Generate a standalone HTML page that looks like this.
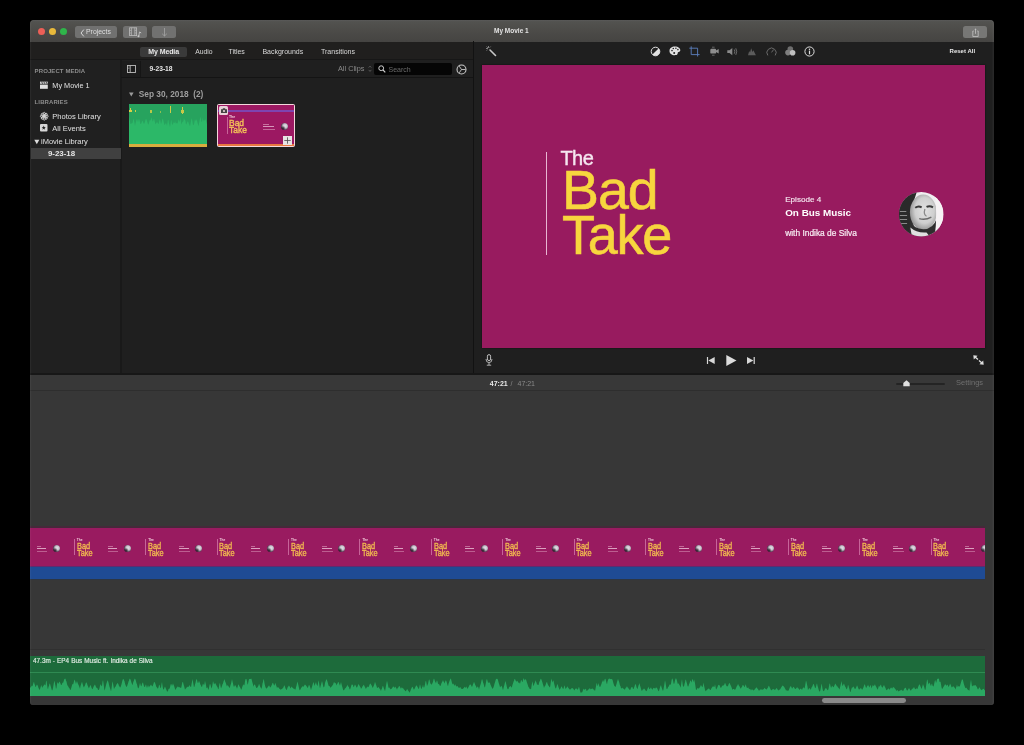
<!DOCTYPE html>
<html><head><meta charset="utf-8">
<style>
*{margin:0;padding:0;box-sizing:border-box}
html,body{width:1024px;height:745px;background:#000;overflow:hidden;font-family:"Liberation Sans",sans-serif;color:#ddd}
#root{position:absolute;left:0;top:0;width:1024px;height:745px;will-change:transform}
.a{position:absolute}
.t{position:absolute;white-space:nowrap;line-height:1}
#win{left:30px;top:20px;width:964px;height:685px;background:#1f1f1f;border-radius:4px 4px 3px 3px;overflow:hidden}
.light{width:7px;height:7px;border-radius:50%;top:27.5px}
.tb{height:12px;top:26px;border-radius:2.5px;background:#717170}
.th{top:527px;width:71.4px;height:40px}
.tt{white-space:nowrap;font-weight:bold;line-height:1}
svg{position:absolute;overflow:visible}
</style></head><body><div id="root">
<div id="win" class="a">
<!-- title bar -->
<div class="a" style="left:0;top:0;width:964px;height:21.6px;background:linear-gradient(#5a5a59,#52524f 8%,#4c4b48 50%,#454442)"></div>
<!-- tabs row -->
<div class="a" style="left:0;top:21.6px;width:443px;height:18.4px;background:#201f1e;border-bottom:1px solid #171717"></div>
<!-- sidebar -->
<div class="a" style="left:0;top:40px;width:91px;height:314px;background:#202020"></div>
<!-- browser -->
<div class="a" style="left:90.3px;top:40px;width:352.7px;height:314px;background:#1f1f1f;border-left:2px solid #191919"></div>
<div class="a" style="left:91px;top:57px;width:352px;height:1px;background:#141414"></div>
<!-- divider -->
<div class="a" style="left:442.5px;top:21px;width:1.5px;height:333px;background:#121212"></div>
<!-- viewer -->
<div class="a" style="left:444px;top:21.6px;width:520px;height:332.4px;background:#1f1f1f"></div>
<!-- timeline -->
<div class="a" style="left:0;top:353px;width:964px;height:1.5px;background:#171717"></div>
<div class="a" style="left:0;top:354.5px;width:964px;height:15.5px;background:#383838"></div>
<div class="a" style="left:0;top:370px;width:964px;height:1px;background:#2e2e2e"></div>
<div class="a" style="left:0;top:371px;width:964px;height:314px;background:#373737"></div>
</div>

<!-- ===== title bar contents ===== -->
<div class="a light" style="left:37.5px;background:#ec5f57"></div>
<div class="a light" style="left:48.5px;background:#e9b93b"></div>
<div class="a light" style="left:59.5px;background:#2fb54a"></div>
<div class="a tb" style="left:75px;width:42px"></div>
<svg style="left:79.5px;top:28.5px" width="5" height="8" viewBox="0 0 5 8"><path d="M3.8,0.6 L1,4 L3.8,7.4" fill="none" stroke="#d8d8d8" stroke-width="1"/></svg>
<div class="t" style="left:86px;top:29.3px;font-size:6.9px;color:#dedede">Projects</div>
<div class="a tb" style="left:123px;width:24px"></div>
<svg style="left:129px;top:27px" width="14" height="11" viewBox="0 0 14 11"><rect x="0.6" y="0.8" width="7" height="7.8" fill="none" stroke="#bdbdbd" stroke-width="0.8"/><path d="M2.4,0.8 V8.6 M5.8,0.8 V8.6" stroke="#bdbdbd" stroke-width="0.7"/><path d="M0.6,3.4 H2.4 M0.6,6 H2.4 M5.8,3.4 H7.6 M5.8,6 H7.6" stroke="#bdbdbd" stroke-width="0.6"/><path d="M10.5,5 L9.8,9.2" stroke="#c8c8c8" stroke-width="0.8"/><circle cx="9.5" cy="9.3" r="1" fill="#c8c8c8"/><path d="M10.5,5 L12.2,6" stroke="#c8c8c8" stroke-width="1"/></svg>
<div class="a tb" style="left:152px;width:24px"></div>
<svg style="left:161px;top:27px" width="7" height="10" viewBox="0 0 7 10"><path d="M3.5,1 V9 M1.2,6.8 L3.5,9 L5.8,6.8" fill="none" stroke="#a8a8a8" stroke-width="0.75"/></svg>
<div class="t" style="left:494px;top:28.2px;font-size:6.5px;font-weight:bold;color:#e2e2e2">My Movie 1</div>
<div class="a tb" style="left:962.8px;width:23.8px;top:25.9px;background:#777775"></div>
<svg style="left:971.5px;top:27.5px" width="7" height="9" viewBox="0 0 7 9"><path d="M1.8,3 H0.8 V8.5 H6.2 V3 H5.2 M3.5,1 V5.8" fill="none" stroke="#c8c8c8" stroke-width="0.75"/><path d="M2.3,1.6 L3.5,0.4 L4.7,1.6 Z" fill="#c8c8c8"/></svg>

<!-- ===== tabs ===== -->
<div class="a" style="left:140px;top:47px;width:46.5px;height:10px;border-radius:2px;background:#3a3a3a"></div>
<div class="t" style="left:148.3px;top:48.2px;font-size:7px;font-weight:bold;color:#e8e8e8;letter-spacing:-.1px">My Media</div>
<div class="t" style="left:195.2px;top:48.7px;font-size:6.8px;color:#d8d8d8">Audio</div>
<div class="t" style="left:228.4px;top:48.2px;font-size:7px;color:#d8d8d8">Titles</div>
<div class="t" style="left:262.4px;top:48.2px;font-size:7px;color:#d8d8d8">Backgrounds</div>
<div class="t" style="left:321px;top:48.2px;font-size:7px;color:#d8d8d8">Transitions</div>

<!-- ===== sidebar ===== -->
<div class="t" style="left:34.6px;top:68px;font-size:6px;font-weight:bold;color:#8e8e8e;letter-spacing:.1px">PROJECT MEDIA</div>
<svg style="left:40.2px;top:81px" width="8" height="8" viewBox="0 0 8 8"><rect x="0" y="3.6" width="7.8" height="4.2" fill="#e0e0e0"/><rect x="0" y="0.6" width="7.8" height="2.2" fill="#d0d0d0"/><path d="M1.6,0.6 L2.6,2.8 M3.8,0.6 L4.8,2.8 M6,0.6 L7,2.8" stroke="#202020" stroke-width=".7"/></svg>
<div class="t" style="left:52.3px;top:82px;font-size:7.3px;color:#e0e0e0">My Movie 1</div>
<div class="t" style="left:34.6px;top:98.7px;font-size:6px;font-weight:bold;color:#8e8e8e;letter-spacing:.1px">LIBRARIES</div>
<svg style="left:40.1px;top:111.8px" width="8.5" height="8.5" viewBox="0 0 8 8"><g fill="none" stroke="#d8d8d8" stroke-width=".8"><ellipse cx="4" cy="2" rx="1.1" ry="1.7"/><ellipse cx="4" cy="6" rx="1.1" ry="1.7"/><ellipse cx="2" cy="4" rx="1.7" ry="1.1"/><ellipse cx="6" cy="4" rx="1.7" ry="1.1"/><ellipse cx="2.6" cy="2.6" rx="1.1" ry="1.6" transform="rotate(-45 2.6 2.6)"/><ellipse cx="5.4" cy="5.4" rx="1.1" ry="1.6" transform="rotate(-45 5.4 5.4)"/><ellipse cx="5.4" cy="2.6" rx="1.1" ry="1.6" transform="rotate(45 5.4 2.6)"/><ellipse cx="2.6" cy="5.4" rx="1.1" ry="1.6" transform="rotate(45 2.6 5.4)"/></g></svg>
<div class="t" style="left:52.3px;top:112.5px;font-size:7.5px;color:#e0e0e0">Photos Library</div>
<svg style="left:40.3px;top:124.2px" width="8" height="8" viewBox="0 0 8 8"><rect x="0" y="0" width="7.5" height="7.5" rx="1" fill="#d8d8d8"/><path d="M3.75,1.6 L4.3,3.1 L5.9,3.1 L4.6,4.1 L5.1,5.7 L3.75,4.7 L2.4,5.7 L2.9,4.1 L1.6,3.1 L3.2,3.1 Z" fill="#232323"/></svg>
<div class="t" style="left:52.3px;top:124.5px;font-size:7.5px;color:#e0e0e0">All Events</div>
<svg style="left:34px;top:138.5px" width="6" height="6" viewBox="0 0 6 6"><path d="M0.3,0.8 H5.3 L2.8,5.2 Z" fill="#dcdcdc"/></svg>
<div class="t" style="left:41px;top:137.7px;font-size:7.5px;color:#e0e0e0">iMovie Library</div>
<div class="a" style="left:30.5px;top:147.7px;width:90.5px;height:11.5px;background:#404040"></div>
<div class="t" style="left:47.9px;top:149.5px;font-size:7.9px;font-weight:bold;color:#e6e6e6">9-23-18</div>

<!-- ===== browser toolbar ===== -->
<div class="a" style="left:121.5px;top:60.5px;width:19px;height:16.5px;background:#1c1c1c;border-right:1px solid #151515"></div>
<svg style="left:126.5px;top:64.5px" width="9" height="8" viewBox="0 0 9 8"><rect x="0.5" y="0.5" width="8" height="7" fill="none" stroke="#bdbdbd" stroke-width=".9"/><path d="M3.2,0.5 V7.5" stroke="#bdbdbd" stroke-width=".9"/><path d="M1.2,2 H2.5 M1.2,3.5 H2.5" stroke="#bdbdbd" stroke-width=".5"/></svg>
<div class="t" style="left:149.5px;top:65.5px;font-size:6.7px;font-weight:bold;color:#e6e6e6">9-23-18</div>
<div class="t" style="left:338px;top:65.1px;font-size:7.3px;color:#8a8a8a">All Clips</div>
<svg style="left:368px;top:64.8px" width="4" height="8" viewBox="0 0 4 8"><path d="M0.7,2.6 L2,1.1 L3.3,2.6 M0.7,4.9 L2,6.4 L3.3,4.9" fill="none" stroke="#6a6a6a" stroke-width=".7"/></svg>
<div class="a" style="left:374.3px;top:63px;width:78.2px;height:11.5px;border-radius:2px;background:#050505"></div>
<svg style="left:378px;top:65px" width="8" height="8" viewBox="0 0 8 8"><circle cx="3.2" cy="3.2" r="2.4" fill="none" stroke="#d0d0d0" stroke-width="1"/><path d="M5,5 L7.3,7.3" stroke="#d0d0d0" stroke-width="1.1"/></svg>
<div class="t" style="left:388.5px;top:65.5px;font-size:7px;color:#6a6a6a">Search</div>
<svg style="left:456px;top:64.4px" width="11" height="11" viewBox="0 0 11 11"><circle cx="5.5" cy="5.5" r="4.5" fill="none" stroke="#cacaca" stroke-width="1.1"/><path d="M5.5,5.5 L3.3,2.2 M5.5,5.5 L3.3,8.8 M5.5,5.5 H9.5" stroke="#cacaca" stroke-width=".9"/></svg>

<!-- ===== browser content ===== -->
<svg style="left:129.4px;top:91.5px" width="5" height="5" viewBox="0 0 5 5"><path d="M0,0.6 H4.6 L2.3,4.6 Z" fill="#9a9a9a"/></svg>
<div class="t" style="left:138.8px;top:89.8px;font-size:8.3px;font-weight:bold;color:#9e9e9e;white-space:pre">Sep 30, 2018  (2)</div>
<!-- green clip -->
<div class="a" style="left:129.3px;top:103.8px;width:77.8px;height:43px;background:#27a35e;overflow:hidden">
  <svg style="left:0;top:0" width="78" height="40" viewBox="0 0 78 40"><path d="M0,40 L0,12.4 L0.5,14.9 L1,17.4 L1.5,19.9 L2,19.9 L2.5,19.2 L3,19.3 L3.5,18.9 L4,16.6 L4.5,14.3 L5,16.6 L5.5,19.0 L6,21.8 L6.5,19.4 L7,17.7 L7.5,16.0 L8,14.7 L8.5,16.4 L9,18.0 L9.5,16.2 L10,14.5 L10.5,16.3 L11,18.1 L11.5,19.9 L12,19.9 L12.5,18.7 L13,17.6 L13.5,16.6 L14,17.7 L14.5,18.9 L15,20.0 L15.5,19.2 L16,17.6 L16.5,16.0 L17,14.4 L17.5,15.5 L18,17.1 L18.5,18.6 L19,20.2 L19.5,20.6 L20,18.8 L20.5,17.0 L21,15.5 L21.5,16.7 L22,14.8 L22.5,13.3 L23,15.2 L23.5,17.0 L24,17.5 L24.5,15.6 L25,14.6 L25.5,16.5 L26,18.4 L26.5,20.3 L27,19.6 L27.5,18.8 L28,17.9 L28.5,18.5 L29,19.4 L29.5,20.2 L30,18.2 L30.5,15.9 L31,15.2 L31.5,17.6 L32,20.0 L32.5,18.8 L33,16.6 L33.5,14.4 L34,15.0 L34.5,17.1 L35,19.3 L35.5,21.1 L36,20.6 L36.5,19.6 L37,19.1 L37.5,20.2 L38,21.7 L38.5,18.4 L39,15.5 L39.5,16.4 L40,19.4 L40.5,20.9 L41,22.9 L41.5,20.0 L42,16.3 L42.5,16.6 L43,20.3 L43.5,20.7 L44,20.1 L44.5,18.0 L45,18.9 L45.5,19.0 L46,17.0 L46.5,18.6 L47,19.7 L47.5,18.9 L48,19.3 L48.5,19.6 L49,17.7 L49.5,15.7 L50,15.6 L50.5,17.6 L51,17.7 L51.5,12.9 L52,18.1 L52.5,20.5 L53,19.0 L53.5,17.6 L54,17.9 L54.5,16.4 L55,13.4 L55.5,15.9 L56,15.7 L56.5,17.1 L57,20.5 L57.5,20.1 L58,18.8 L58.5,17.4 L59,17.2 L59.5,18.6 L60,19.9 L60.5,20.9 L61,22.3 L61.5,19.7 L62,16.9 L62.5,14.2 L63,15.2 L63.5,18.0 L64,20.7 L64.5,21.2 L65,19.9 L65.5,17.5 L66,15.0 L66.5,16.5 L67,16.9 L67.5,14.9 L68,16.7 L68.5,18.6 L69,20.6 L69.5,22.2 L70,19.6 L70.5,17.0 L71,14.3 L71.5,12.8 L72,15.4 L72.5,18.1 L73,17.4 L73.5,13.3 L74,17.8 L74.5,16.0 L75,15.9 L75.5,16.8 L76,15.2 L76.5,15.5 L77,17.1 L77.5,18.7 L78,20.2 L78,40 Z" fill="#2cb868"/></svg>
  <div class="a" style="left:0;top:40px;width:78px;height:3px;background:#d8ac3e"></div>
  <div class="a" style="left:.5px;top:4px;width:1px;height:4px;background:#d8d048"></div>
  <div class="a" style="left:0;top:6.5px;width:3px;height:2px;background:#d8d048"></div>
  <div class="a" style="left:5.5px;top:6px;width:1.5px;height:2.5px;background:#c8cc48"></div>
  <div class="a" style="left:21px;top:6.5px;width:1.5px;height:2.5px;background:#b8c848"></div>
  <div class="a" style="left:31px;top:7.5px;width:1.2px;height:1.5px;background:#90c050"></div>
  <div class="a" style="left:40.8px;top:2px;width:1px;height:7px;background:#d0cc48"></div>
  <div class="a" style="left:53px;top:3px;width:1px;height:7px;background:#d0cc48"></div>
  <div class="a" style="left:52.2px;top:6.5px;width:2.5px;height:2.5px;background:#c8c848"></div>
</div>
<!-- title clip (selected) -->
<div class="a" style="left:216.8px;top:103.6px;width:78.2px;height:43.8px;border-radius:2px;background:#f4d8dc"></div>
<div class="a" style="left:217.9px;top:104.7px;width:76px;height:41.6px;background:#9c1862;overflow:hidden">
  <div class="a" style="left:0;top:5.4px;width:76px;height:2.2px;background:#7e44b0"></div>
  <div class="a" style="left:1.4px;top:1.6px;width:8.4px;height:8.4px;border-radius:1.5px;background:#e8d0d8"></div>
  <svg style="left:3px;top:3.4px" width="6" height="5" viewBox="0 0 6 5"><path d="M0,1.2 H1.5 L2,0.3 H4 L4.5,1.2 H6 V5 H0 Z" fill="#444"/><circle cx="3" cy="3" r="1.1" fill="#e8d0d8"/></svg>
  <div class="a" style="left:8.8px;top:12px;width:.8px;height:17px;background:rgba(255,190,220,.45)"></div>
  <div class="tt a" style="left:11px;top:11px;font-size:3.5px;color:#f0c8d8">The</div>
  <div class="tt a" style="left:11px;top:14.6px;font-size:9.6px;line-height:7px;font-weight:normal;color:#f4c058;-webkit-text-stroke:.4px #f4c058;transform:scaleX(.88);transform-origin:0 0">Bad<br>Take</div>
  <div class="a" style="left:45.5px;top:19.5px;width:6px;height:.9px;background:rgba(255,220,235,.45)"></div>
  <div class="a" style="left:45.5px;top:21.4px;width:10.5px;height:1.3px;background:rgba(255,235,245,.6)"></div>
  <div class="a" style="left:45.5px;top:24.6px;width:11.5px;height:.9px;background:rgba(255,220,235,.4)"></div>
  <div class="a" style="left:63.3px;top:18.5px;width:7px;height:7px;border-radius:50%;background:radial-gradient(circle at 30% 75%,rgba(30,20,30,.85),rgba(30,20,30,0) 35%),radial-gradient(circle at 60% 42%,#e6e2ea,#c8c2cc 35%,#7a6a7a 58%,#2a2030 75%)"></div>
  <div class="a" style="left:0;top:39px;width:76px;height:2.6px;background:#e87840"></div>
  <div class="a" style="left:65.4px;top:31px;width:9.2px;height:9px;background:#e8e4e4"></div>
  <svg style="left:66.5px;top:32px" width="7" height="7" viewBox="0 0 7 7"><path d="M3.5,0.3 V6.7 M0.3,3.5 H6.7" stroke="#4a4a4a" stroke-width=".8"/></svg>
</div>

<!-- ===== viewer toolbar ===== -->
<svg style="left:485px;top:45px" width="12" height="12" viewBox="0 0 12 12"><path d="M5,5 L10.5,10.5" stroke="#c8c8c8" stroke-width="1.6" stroke-linecap="round"/><path d="M3.5,1 V3 M1,3.5 H3 M1.6,1.6 L2.8,2.8 M5.6,1.6 L4.6,2.6 M1.6,5.6 L2.6,4.6" stroke="#aaa" stroke-width=".7"/></svg>
<!-- color balance -->
<svg style="left:650px;top:45.7px" width="11" height="11" viewBox="0 0 11 11"><circle cx="5.5" cy="5.5" r="4.3" fill="#222" stroke="#e2e2e2" stroke-width="1"/><path d="M8.55,2.45 A4.3,4.3 0 0 1 2.45,8.55 Z" fill="#e2e2e2"/></svg>
<!-- palette -->
<svg style="left:669.3px;top:45.8px" width="12" height="10" viewBox="0 0 12 10"><path d="M5.8,0.6 C9.3,0.6 11.4,2.6 11.3,4.4 C11.2,5.8 9.6,5.5 9,6.2 C8.4,7 9.2,8.6 7,9.1 C3.4,9.7 0.5,7.7 0.5,4.9 C0.5,2.3 2.8,0.6 5.8,0.6 Z" fill="#e2e2e2"/><circle cx="3" cy="4.6" r=".8" fill="#222"/><circle cx="4.3" cy="2.5" r=".8" fill="#222"/><circle cx="6.9" cy="2.3" r=".8" fill="#222"/><circle cx="8.9" cy="3.6" r=".8" fill="#222"/><circle cx="5.2" cy="7" r="1" fill="#222"/></svg>
<!-- crop -->
<svg style="left:689px;top:46.3px" width="11" height="11" viewBox="0 0 11 11"><path d="M2.2,0.3 V8.6 H10.6 M0.3,2.2 H8.6 V10.5" fill="none" stroke="#5a7cb8" stroke-width=".95"/></svg>
<!-- stabilization camera -->
<svg style="left:709.5px;top:46.3px" width="9" height="10" viewBox="0 0 9 10"><rect x="0.3" y="2.8" width="5.8" height="4.8" rx="1.2" fill="#8e8e8e"/><path d="M6,4.4 L8.7,3 V7.4 L6,6 Z" fill="#8e8e8e"/><path d="M2,1.2 H4.6 M2,9.2 H4.6" stroke="#6e6e6e" stroke-width=".9"/></svg>
<!-- volume -->
<svg style="left:727.3px;top:48px" width="11" height="8" viewBox="0 0 11 8"><path d="M0.3,2.2 H2.5 L5.3,0 V7.2 L2.5,5 H0.3 Z" fill="#8a8a8a"/><path d="M7.3,1.5 Q8.4,3.6 7.3,5.7 M8.8,0.3 Q10.6,3.6 8.8,6.9" fill="none" stroke="#7a7a7a" stroke-width=".85"/></svg>
<!-- noise eq -->
<svg style="left:747.8px;top:47.6px" width="8" height="7.5" viewBox="0 0 8 7.5"><path d="M0,7.2 L1.2,3 L2,4.4 L3.2,0.3 L4.5,4 L5.4,2.2 L6.5,4.6 L7.9,7.2 Z" fill="#5c5c5c"/></svg>
<!-- speed -->
<svg style="left:765.5px;top:45.8px" width="11" height="10.5" viewBox="0 0 11 10.5"><path d="M1.8,9.4 A4.6,4.6 0 1 1 9.2,9.4" fill="none" stroke="#6e6e6e" stroke-width=".95"/><path d="M5.5,6.4 L7.6,3.6" stroke="#6e6e6e" stroke-width=".95"/></svg>
<!-- clip filter -->
<svg style="left:784.8px;top:46.4px" width="11" height="10.5" viewBox="0 0 11 10.5"><circle cx="5.3" cy="3" r="2.8" fill="#6e6e6e"/><circle cx="3" cy="6.6" r="2.8" fill="#7e7e7e"/><circle cx="7.6" cy="6.8" r="2.8" fill="#c0c0c0"/></svg>
<!-- info -->
<svg style="left:803.5px;top:45.5px" width="11" height="11" viewBox="0 0 11 11"><circle cx="5.5" cy="5.5" r="4.6" fill="none" stroke="#e0e0e0" stroke-width="1"/><circle cx="5.5" cy="3.2" r=".75" fill="#e0e0e0"/><path d="M5.5,4.6 V8.3" stroke="#e0e0e0" stroke-width="1.2"/></svg>
<div class="t" style="left:949.6px;top:47.6px;font-size:6px;font-weight:bold;color:#e8e8e8">Reset All</div>

<!-- ===== viewer frame ===== -->
<div class="a" style="left:481.5px;top:65px;width:503.5px;height:283px;background:#981b5f;overflow:hidden;box-shadow:0 0 1.5px #0c0c0c">
  <div class="a" style="left:64px;top:86.7px;width:1.8px;height:103px;background:#e8b6d2"></div>
  <div class="t" style="left:79px;top:83px;font-size:20px;color:#f6e6f0;letter-spacing:-.6px;-webkit-text-stroke:.4px #f6e6f0">The</div>
  <div class="t" style="left:80px;top:97px;font-size:56px;color:#f7d63e;letter-spacing:-1px;-webkit-text-stroke:.6px #f7d63e;transform:scaleX(.99);transform-origin:0 0">Bad</div>
  <div class="t" style="left:80.5px;top:142.2px;font-size:56px;color:#f7d63e;letter-spacing:-1.3px;-webkit-text-stroke:.6px #f7d63e;transform:scaleX(.965);transform-origin:0 0">Take</div>
  <div class="t" style="left:303.7px;top:130.5px;font-size:8.1px;color:#f4e4ee;-webkit-text-stroke:.15px #f4e4ee">Episode 4</div>
  <div class="t" style="left:303.7px;top:143.3px;font-size:9.9px;font-weight:bold;color:#fff">On Bus Music</div>
  <div class="t" style="left:303.7px;top:164px;font-size:8.4px;color:#f8eef4;-webkit-text-stroke:.2px #f8eef4">with Indika de Silva</div>
  <svg style="left:417.5px;top:126.8px" width="44.5" height="44.5" viewBox="0 0 55 55">
    <defs><clipPath id="cc"><circle cx="27.5" cy="27.5" r="27.5"/></clipPath>
    <radialGradient id="fg" cx="55%" cy="45%" r="60%"><stop offset="0" stop-color="#e2e2e2"/><stop offset=".6" stop-color="#cfcfcf"/><stop offset="1" stop-color="#8a8a8a"/></radialGradient></defs>
    <g clip-path="url(#cc)">
      <rect width="55" height="55" fill="#f0eef0"/>
      <rect x="0" y="0" width="18" height="55" fill="#3a3a3a"/>
      <path d="M0,0 H22 L18,12 L14,55 H0 Z" fill="#2a2a2a"/>
      <path d="M1,24 H9 M1,29 H10 M1,34 H10 M2,39 H10" stroke="#8a8a8a" stroke-width="1.3"/>
      <ellipse cx="30" cy="25" rx="16.5" ry="22" fill="url(#fg)"/>
      <path d="M20,19.5 Q24,16.5 28,19" stroke="#3a3a3a" stroke-width="2.4" fill="none"/>
      <path d="M34,18.5 Q38,16.5 42,19" stroke="#3a3a3a" stroke-width="2.4" fill="none"/>
      <path d="M32,21 Q30,28 34,30" stroke="#8a8a8a" stroke-width="1.6" fill="none"/>
      <path d="M25,33 Q33,35 40,31" stroke="#6a6a6a" stroke-width="1.6" fill="none"/>
      <path d="M13,34 Q18,46 30,46 Q42,46 47,32 L50,55 L12,55 Z" fill="#2e2e2e"/>
      <path d="M14,44 Q22,51 34,50 L38,55 L16,55 Z" fill="#e0e0e0"/>
      <path d="M44,0 H55 V55 H44 Q48,28 44,0 Z" fill="#f6f2f4"/>
    </g>
  </svg>
</div>

<!-- ===== viewer controls ===== -->
<svg style="left:484.5px;top:353.5px" width="8" height="12" viewBox="0 0 8 12"><rect x="2.4" y="0.6" width="3.2" height="6" rx="1.6" fill="none" stroke="#cfcfcf" stroke-width=".9"/><path d="M1,5 Q1,8.6 4,8.6 Q7,8.6 7,5 M4,8.6 V11 M1.8,11.2 H6.2" fill="none" stroke="#cfcfcf" stroke-width=".8"/></svg>
<svg style="left:706.5px;top:357.2px" width="8" height="7" viewBox="0 0 8 7"><path d="M0.5,0 V7" stroke="#d8d8d8" stroke-width="1.2"/><path d="M7.7,0 V7 L1.3,3.5 Z" fill="#d8d8d8"/></svg>
<svg style="left:725.9px;top:355px" width="11" height="11" viewBox="0 0 11 11"><path d="M0.3,0 V11 L10.5,5.5 Z" fill="#dcdcdc"/></svg>
<svg style="left:746.8px;top:357.2px" width="8" height="7" viewBox="0 0 8 7"><path d="M7.2,0 V7" stroke="#d8d8d8" stroke-width="1.2"/><path d="M0,0 V7 L6.4,3.5 Z" fill="#d8d8d8"/></svg>
<svg style="left:972.5px;top:355px" width="11" height="10" viewBox="0 0 11 10"><path d="M0.3,0.3 L4.6,0.8 L0.8,4.4 Z M10.7,9.7 L6.4,9.2 L10.2,5.6 Z" fill="#dedede"/><path d="M2,2 L5,4.6 M6,5.4 L9,8" stroke="#dedede" stroke-width="1.3"/></svg>

<!-- ===== timeline header ===== -->
<div class="t" style="left:489.8px;top:379.5px;font-size:7px;font-weight:bold;color:#e8e8e8">47:21</div>
<div class="t" style="left:510.5px;top:379.5px;font-size:7px;color:#8a8a8a">/</div>
<div class="t" style="left:517.5px;top:379.5px;font-size:7px;color:#8a8a8a">47:21</div>
<div class="a" style="left:896.4px;top:382.6px;width:48.4px;height:2px;border-radius:1px;background:#242424"></div>
<svg style="left:902.9px;top:380px" width="7" height="6.5" viewBox="0 0 7 6.5"><path d="M0.3,6.3 V3 L3.5,0.3 L6.7,3 V6.3 Z" fill="#e0e0e0"/></svg>
<div class="t" style="left:956px;top:378.7px;font-size:7.5px;color:#6f6f6f">Settings</div>

<!-- ===== filmstrip ===== -->
<div class="a" style="left:30px;top:525.6px;width:955px;height:2.2px;background:#45293a"></div>
<div class="a" style="left:30px;top:527.8px;width:955px;height:38.8px;background:#991b60;overflow:hidden">
<div class="a" style="left:-30px;top:-527.8px;width:1100px;height:600px">
<div class="a th" style="left:-6.1px">
<div class="a" style="left:8.6px;top:12px;width:.8px;height:15.7px;background:rgba(255,190,225,.45)"></div>
<div class="a tt" style="left:11.5px;top:12.4px;font-size:3.2px;color:#f0c8d8">The</div>
<div class="a tt" style="left:11.3px;top:15.6px;font-size:8.6px;line-height:6.9px;font-weight:normal;color:#f0b850;-webkit-text-stroke:.35px #f0b850;transform:scaleX(.86);transform-origin:0 0">Bad<br>Take</div>
<div class="a" style="left:42.7px;top:18.6px;width:4.7px;height:.9px;background:rgba(255,220,235,.4)"></div>
<div class="a" style="left:42.7px;top:20.8px;width:9.4px;height:1.3px;background:rgba(255,235,245,.65)"></div>
<div class="a" style="left:42.7px;top:23.7px;width:10.5px;height:.9px;background:rgba(255,220,235,.35)"></div>
<div class="a" style="left:58.7px;top:18px;width:7px;height:7px;border-radius:50%;background:radial-gradient(circle at 30% 75%,rgba(30,20,30,.85),rgba(30,20,30,0) 35%),radial-gradient(circle at 60% 42%,#e6e2ea,#c8c2cc 35%,#7a6a7a 58%,#2a2030 75%)"></div>
</div>
<div class="a th" style="left:65.3px">
<div class="a" style="left:8.6px;top:12px;width:.8px;height:15.7px;background:rgba(255,190,225,.45)"></div>
<div class="a tt" style="left:11.5px;top:12.4px;font-size:3.2px;color:#f0c8d8">The</div>
<div class="a tt" style="left:11.3px;top:15.6px;font-size:8.6px;line-height:6.9px;font-weight:normal;color:#f0b850;-webkit-text-stroke:.35px #f0b850;transform:scaleX(.86);transform-origin:0 0">Bad<br>Take</div>
<div class="a" style="left:42.7px;top:18.6px;width:4.7px;height:.9px;background:rgba(255,220,235,.4)"></div>
<div class="a" style="left:42.7px;top:20.8px;width:9.4px;height:1.3px;background:rgba(255,235,245,.65)"></div>
<div class="a" style="left:42.7px;top:23.7px;width:10.5px;height:.9px;background:rgba(255,220,235,.35)"></div>
<div class="a" style="left:58.7px;top:18px;width:7px;height:7px;border-radius:50%;background:radial-gradient(circle at 30% 75%,rgba(30,20,30,.85),rgba(30,20,30,0) 35%),radial-gradient(circle at 60% 42%,#e6e2ea,#c8c2cc 35%,#7a6a7a 58%,#2a2030 75%)"></div>
</div>
<div class="a th" style="left:136.7px">
<div class="a" style="left:8.6px;top:12px;width:.8px;height:15.7px;background:rgba(255,190,225,.45)"></div>
<div class="a tt" style="left:11.5px;top:12.4px;font-size:3.2px;color:#f0c8d8">The</div>
<div class="a tt" style="left:11.3px;top:15.6px;font-size:8.6px;line-height:6.9px;font-weight:normal;color:#f0b850;-webkit-text-stroke:.35px #f0b850;transform:scaleX(.86);transform-origin:0 0">Bad<br>Take</div>
<div class="a" style="left:42.7px;top:18.6px;width:4.7px;height:.9px;background:rgba(255,220,235,.4)"></div>
<div class="a" style="left:42.7px;top:20.8px;width:9.4px;height:1.3px;background:rgba(255,235,245,.65)"></div>
<div class="a" style="left:42.7px;top:23.7px;width:10.5px;height:.9px;background:rgba(255,220,235,.35)"></div>
<div class="a" style="left:58.7px;top:18px;width:7px;height:7px;border-radius:50%;background:radial-gradient(circle at 30% 75%,rgba(30,20,30,.85),rgba(30,20,30,0) 35%),radial-gradient(circle at 60% 42%,#e6e2ea,#c8c2cc 35%,#7a6a7a 58%,#2a2030 75%)"></div>
</div>
<div class="a th" style="left:208.1px">
<div class="a" style="left:8.6px;top:12px;width:.8px;height:15.7px;background:rgba(255,190,225,.45)"></div>
<div class="a tt" style="left:11.5px;top:12.4px;font-size:3.2px;color:#f0c8d8">The</div>
<div class="a tt" style="left:11.3px;top:15.6px;font-size:8.6px;line-height:6.9px;font-weight:normal;color:#f0b850;-webkit-text-stroke:.35px #f0b850;transform:scaleX(.86);transform-origin:0 0">Bad<br>Take</div>
<div class="a" style="left:42.7px;top:18.6px;width:4.7px;height:.9px;background:rgba(255,220,235,.4)"></div>
<div class="a" style="left:42.7px;top:20.8px;width:9.4px;height:1.3px;background:rgba(255,235,245,.65)"></div>
<div class="a" style="left:42.7px;top:23.7px;width:10.5px;height:.9px;background:rgba(255,220,235,.35)"></div>
<div class="a" style="left:58.7px;top:18px;width:7px;height:7px;border-radius:50%;background:radial-gradient(circle at 30% 75%,rgba(30,20,30,.85),rgba(30,20,30,0) 35%),radial-gradient(circle at 60% 42%,#e6e2ea,#c8c2cc 35%,#7a6a7a 58%,#2a2030 75%)"></div>
</div>
<div class="a th" style="left:279.5px">
<div class="a" style="left:8.6px;top:12px;width:.8px;height:15.7px;background:rgba(255,190,225,.45)"></div>
<div class="a tt" style="left:11.5px;top:12.4px;font-size:3.2px;color:#f0c8d8">The</div>
<div class="a tt" style="left:11.3px;top:15.6px;font-size:8.6px;line-height:6.9px;font-weight:normal;color:#f0b850;-webkit-text-stroke:.35px #f0b850;transform:scaleX(.86);transform-origin:0 0">Bad<br>Take</div>
<div class="a" style="left:42.7px;top:18.6px;width:4.7px;height:.9px;background:rgba(255,220,235,.4)"></div>
<div class="a" style="left:42.7px;top:20.8px;width:9.4px;height:1.3px;background:rgba(255,235,245,.65)"></div>
<div class="a" style="left:42.7px;top:23.7px;width:10.5px;height:.9px;background:rgba(255,220,235,.35)"></div>
<div class="a" style="left:58.7px;top:18px;width:7px;height:7px;border-radius:50%;background:radial-gradient(circle at 30% 75%,rgba(30,20,30,.85),rgba(30,20,30,0) 35%),radial-gradient(circle at 60% 42%,#e6e2ea,#c8c2cc 35%,#7a6a7a 58%,#2a2030 75%)"></div>
</div>
<div class="a th" style="left:350.9px">
<div class="a" style="left:8.6px;top:12px;width:.8px;height:15.7px;background:rgba(255,190,225,.45)"></div>
<div class="a tt" style="left:11.5px;top:12.4px;font-size:3.2px;color:#f0c8d8">The</div>
<div class="a tt" style="left:11.3px;top:15.6px;font-size:8.6px;line-height:6.9px;font-weight:normal;color:#f0b850;-webkit-text-stroke:.35px #f0b850;transform:scaleX(.86);transform-origin:0 0">Bad<br>Take</div>
<div class="a" style="left:42.7px;top:18.6px;width:4.7px;height:.9px;background:rgba(255,220,235,.4)"></div>
<div class="a" style="left:42.7px;top:20.8px;width:9.4px;height:1.3px;background:rgba(255,235,245,.65)"></div>
<div class="a" style="left:42.7px;top:23.7px;width:10.5px;height:.9px;background:rgba(255,220,235,.35)"></div>
<div class="a" style="left:58.7px;top:18px;width:7px;height:7px;border-radius:50%;background:radial-gradient(circle at 30% 75%,rgba(30,20,30,.85),rgba(30,20,30,0) 35%),radial-gradient(circle at 60% 42%,#e6e2ea,#c8c2cc 35%,#7a6a7a 58%,#2a2030 75%)"></div>
</div>
<div class="a th" style="left:422.3px">
<div class="a" style="left:8.6px;top:12px;width:.8px;height:15.7px;background:rgba(255,190,225,.45)"></div>
<div class="a tt" style="left:11.5px;top:12.4px;font-size:3.2px;color:#f0c8d8">The</div>
<div class="a tt" style="left:11.3px;top:15.6px;font-size:8.6px;line-height:6.9px;font-weight:normal;color:#f0b850;-webkit-text-stroke:.35px #f0b850;transform:scaleX(.86);transform-origin:0 0">Bad<br>Take</div>
<div class="a" style="left:42.7px;top:18.6px;width:4.7px;height:.9px;background:rgba(255,220,235,.4)"></div>
<div class="a" style="left:42.7px;top:20.8px;width:9.4px;height:1.3px;background:rgba(255,235,245,.65)"></div>
<div class="a" style="left:42.7px;top:23.7px;width:10.5px;height:.9px;background:rgba(255,220,235,.35)"></div>
<div class="a" style="left:58.7px;top:18px;width:7px;height:7px;border-radius:50%;background:radial-gradient(circle at 30% 75%,rgba(30,20,30,.85),rgba(30,20,30,0) 35%),radial-gradient(circle at 60% 42%,#e6e2ea,#c8c2cc 35%,#7a6a7a 58%,#2a2030 75%)"></div>
</div>
<div class="a th" style="left:493.7px">
<div class="a" style="left:8.6px;top:12px;width:.8px;height:15.7px;background:rgba(255,190,225,.45)"></div>
<div class="a tt" style="left:11.5px;top:12.4px;font-size:3.2px;color:#f0c8d8">The</div>
<div class="a tt" style="left:11.3px;top:15.6px;font-size:8.6px;line-height:6.9px;font-weight:normal;color:#f0b850;-webkit-text-stroke:.35px #f0b850;transform:scaleX(.86);transform-origin:0 0">Bad<br>Take</div>
<div class="a" style="left:42.7px;top:18.6px;width:4.7px;height:.9px;background:rgba(255,220,235,.4)"></div>
<div class="a" style="left:42.7px;top:20.8px;width:9.4px;height:1.3px;background:rgba(255,235,245,.65)"></div>
<div class="a" style="left:42.7px;top:23.7px;width:10.5px;height:.9px;background:rgba(255,220,235,.35)"></div>
<div class="a" style="left:58.7px;top:18px;width:7px;height:7px;border-radius:50%;background:radial-gradient(circle at 30% 75%,rgba(30,20,30,.85),rgba(30,20,30,0) 35%),radial-gradient(circle at 60% 42%,#e6e2ea,#c8c2cc 35%,#7a6a7a 58%,#2a2030 75%)"></div>
</div>
<div class="a th" style="left:565.1px">
<div class="a" style="left:8.6px;top:12px;width:.8px;height:15.7px;background:rgba(255,190,225,.45)"></div>
<div class="a tt" style="left:11.5px;top:12.4px;font-size:3.2px;color:#f0c8d8">The</div>
<div class="a tt" style="left:11.3px;top:15.6px;font-size:8.6px;line-height:6.9px;font-weight:normal;color:#f0b850;-webkit-text-stroke:.35px #f0b850;transform:scaleX(.86);transform-origin:0 0">Bad<br>Take</div>
<div class="a" style="left:42.7px;top:18.6px;width:4.7px;height:.9px;background:rgba(255,220,235,.4)"></div>
<div class="a" style="left:42.7px;top:20.8px;width:9.4px;height:1.3px;background:rgba(255,235,245,.65)"></div>
<div class="a" style="left:42.7px;top:23.7px;width:10.5px;height:.9px;background:rgba(255,220,235,.35)"></div>
<div class="a" style="left:58.7px;top:18px;width:7px;height:7px;border-radius:50%;background:radial-gradient(circle at 30% 75%,rgba(30,20,30,.85),rgba(30,20,30,0) 35%),radial-gradient(circle at 60% 42%,#e6e2ea,#c8c2cc 35%,#7a6a7a 58%,#2a2030 75%)"></div>
</div>
<div class="a th" style="left:636.5px">
<div class="a" style="left:8.6px;top:12px;width:.8px;height:15.7px;background:rgba(255,190,225,.45)"></div>
<div class="a tt" style="left:11.5px;top:12.4px;font-size:3.2px;color:#f0c8d8">The</div>
<div class="a tt" style="left:11.3px;top:15.6px;font-size:8.6px;line-height:6.9px;font-weight:normal;color:#f0b850;-webkit-text-stroke:.35px #f0b850;transform:scaleX(.86);transform-origin:0 0">Bad<br>Take</div>
<div class="a" style="left:42.7px;top:18.6px;width:4.7px;height:.9px;background:rgba(255,220,235,.4)"></div>
<div class="a" style="left:42.7px;top:20.8px;width:9.4px;height:1.3px;background:rgba(255,235,245,.65)"></div>
<div class="a" style="left:42.7px;top:23.7px;width:10.5px;height:.9px;background:rgba(255,220,235,.35)"></div>
<div class="a" style="left:58.7px;top:18px;width:7px;height:7px;border-radius:50%;background:radial-gradient(circle at 30% 75%,rgba(30,20,30,.85),rgba(30,20,30,0) 35%),radial-gradient(circle at 60% 42%,#e6e2ea,#c8c2cc 35%,#7a6a7a 58%,#2a2030 75%)"></div>
</div>
<div class="a th" style="left:707.9px">
<div class="a" style="left:8.6px;top:12px;width:.8px;height:15.7px;background:rgba(255,190,225,.45)"></div>
<div class="a tt" style="left:11.5px;top:12.4px;font-size:3.2px;color:#f0c8d8">The</div>
<div class="a tt" style="left:11.3px;top:15.6px;font-size:8.6px;line-height:6.9px;font-weight:normal;color:#f0b850;-webkit-text-stroke:.35px #f0b850;transform:scaleX(.86);transform-origin:0 0">Bad<br>Take</div>
<div class="a" style="left:42.7px;top:18.6px;width:4.7px;height:.9px;background:rgba(255,220,235,.4)"></div>
<div class="a" style="left:42.7px;top:20.8px;width:9.4px;height:1.3px;background:rgba(255,235,245,.65)"></div>
<div class="a" style="left:42.7px;top:23.7px;width:10.5px;height:.9px;background:rgba(255,220,235,.35)"></div>
<div class="a" style="left:58.7px;top:18px;width:7px;height:7px;border-radius:50%;background:radial-gradient(circle at 30% 75%,rgba(30,20,30,.85),rgba(30,20,30,0) 35%),radial-gradient(circle at 60% 42%,#e6e2ea,#c8c2cc 35%,#7a6a7a 58%,#2a2030 75%)"></div>
</div>
<div class="a th" style="left:779.3px">
<div class="a" style="left:8.6px;top:12px;width:.8px;height:15.7px;background:rgba(255,190,225,.45)"></div>
<div class="a tt" style="left:11.5px;top:12.4px;font-size:3.2px;color:#f0c8d8">The</div>
<div class="a tt" style="left:11.3px;top:15.6px;font-size:8.6px;line-height:6.9px;font-weight:normal;color:#f0b850;-webkit-text-stroke:.35px #f0b850;transform:scaleX(.86);transform-origin:0 0">Bad<br>Take</div>
<div class="a" style="left:42.7px;top:18.6px;width:4.7px;height:.9px;background:rgba(255,220,235,.4)"></div>
<div class="a" style="left:42.7px;top:20.8px;width:9.4px;height:1.3px;background:rgba(255,235,245,.65)"></div>
<div class="a" style="left:42.7px;top:23.7px;width:10.5px;height:.9px;background:rgba(255,220,235,.35)"></div>
<div class="a" style="left:58.7px;top:18px;width:7px;height:7px;border-radius:50%;background:radial-gradient(circle at 30% 75%,rgba(30,20,30,.85),rgba(30,20,30,0) 35%),radial-gradient(circle at 60% 42%,#e6e2ea,#c8c2cc 35%,#7a6a7a 58%,#2a2030 75%)"></div>
</div>
<div class="a th" style="left:850.7px">
<div class="a" style="left:8.6px;top:12px;width:.8px;height:15.7px;background:rgba(255,190,225,.45)"></div>
<div class="a tt" style="left:11.5px;top:12.4px;font-size:3.2px;color:#f0c8d8">The</div>
<div class="a tt" style="left:11.3px;top:15.6px;font-size:8.6px;line-height:6.9px;font-weight:normal;color:#f0b850;-webkit-text-stroke:.35px #f0b850;transform:scaleX(.86);transform-origin:0 0">Bad<br>Take</div>
<div class="a" style="left:42.7px;top:18.6px;width:4.7px;height:.9px;background:rgba(255,220,235,.4)"></div>
<div class="a" style="left:42.7px;top:20.8px;width:9.4px;height:1.3px;background:rgba(255,235,245,.65)"></div>
<div class="a" style="left:42.7px;top:23.7px;width:10.5px;height:.9px;background:rgba(255,220,235,.35)"></div>
<div class="a" style="left:58.7px;top:18px;width:7px;height:7px;border-radius:50%;background:radial-gradient(circle at 30% 75%,rgba(30,20,30,.85),rgba(30,20,30,0) 35%),radial-gradient(circle at 60% 42%,#e6e2ea,#c8c2cc 35%,#7a6a7a 58%,#2a2030 75%)"></div>
</div>
<div class="a th" style="left:922.1px">
<div class="a" style="left:8.6px;top:12px;width:.8px;height:15.7px;background:rgba(255,190,225,.45)"></div>
<div class="a tt" style="left:11.5px;top:12.4px;font-size:3.2px;color:#f0c8d8">The</div>
<div class="a tt" style="left:11.3px;top:15.6px;font-size:8.6px;line-height:6.9px;font-weight:normal;color:#f0b850;-webkit-text-stroke:.35px #f0b850;transform:scaleX(.86);transform-origin:0 0">Bad<br>Take</div>
<div class="a" style="left:42.7px;top:18.6px;width:4.7px;height:.9px;background:rgba(255,220,235,.4)"></div>
<div class="a" style="left:42.7px;top:20.8px;width:9.4px;height:1.3px;background:rgba(255,235,245,.65)"></div>
<div class="a" style="left:42.7px;top:23.7px;width:10.5px;height:.9px;background:rgba(255,220,235,.35)"></div>
<div class="a" style="left:58.7px;top:18px;width:7px;height:7px;border-radius:50%;background:radial-gradient(circle at 30% 75%,rgba(30,20,30,.85),rgba(30,20,30,0) 35%),radial-gradient(circle at 60% 42%,#e6e2ea,#c8c2cc 35%,#7a6a7a 58%,#2a2030 75%)"></div>
</div>
</div>
</div>
<div class="a" style="left:30px;top:566.6px;width:955px;height:12px;background:#1f4b94"></div>
<div class="a" style="left:30px;top:565.8px;width:955px;height:1.6px;background:#5c2c70"></div>
<div class="a" style="left:30px;top:578.6px;width:955px;height:1.8px;background:#2d3644"></div>

<!-- ===== audio ===== -->
<div class="a" style="left:30px;top:648.5px;width:955px;height:1px;background:#303030"></div>
<div class="a" style="left:30px;top:656px;width:955px;height:40px;background:#1d6b3b;overflow:hidden">
  <div class="a" style="left:0;top:15.6px;width:955px;height:1px;background:#2f8a52"></div>
  <svg style="left:0;top:16.9px" width="955" height="23" viewBox="0 3 955 20" preserveAspectRatio="none"><path d="M0,23 L0,15.0 L0.5,15.8 L1,15.7 L1.5,13.8 L2,14.6 L2.5,14.4 L3,12.9 L3.5,11.5 L4,10.7 L4.5,12.5 L5,13.6 L5.5,15.5 L6,14.7 L6.5,13.7 L7,12.9 L7.5,13.6 L8,14.6 L8.5,16.0 L9,16.8 L9.5,17.8 L10,17.2 L10.5,15.4 L11,14.3 L11.5,13.5 L12,15.7 L12.5,15.7 L13,14.6 L13.5,14.2 L14,12.9 L14.5,12.9 L15,13.5 L15.5,13.8 L16,10.5 L16.5,9.5 L17,12.6 L17.5,16.0 L18,17.2 L18.5,15.0 L19,14.3 L19.5,12.2 L20,12.4 L20.5,13.8 L21,15.5 L21.5,17.0 L22,18.2 L22.5,17.7 L23,16.1 L23.5,13.5 L24,11.1 L24.5,9.7 L25,12.2 L25.5,14.4 L26,16.9 L26.5,15.9 L27,12.8 L27.5,10.8 L28,11.9 L28.5,12.3 L29,11.1 L29.5,10.4 L30,11.3 L30.5,12.2 L31,13.4 L31.5,13.5 L32,12.5 L32.5,11.3 L33,11.8 L33.5,10.6 L34,9.1 L34.5,7.9 L35,8.3 L35.5,7.8 L36,9.8 L36.5,10.5 L37,12.6 L37.5,13.9 L38,14.4 L38.5,15.2 L39,15.9 L39.5,16.3 L40,17.6 L40.5,17.8 L41,16.7 L41.5,15.2 L42,13.7 L42.5,12.3 L43,12.9 L43.5,11.9 L44,10.1 L44.5,8.6 L45,9.5 L45.5,11.1 L46,12.5 L46.5,11.1 L47,10.0 L47.5,11.2 L48,12.5 L48.5,13.2 L49,14.3 L49.5,15.4 L50,16.6 L50.5,14.4 L51,13.1 L51.5,11.7 L52,10.6 L52.5,12.1 L53,13.6 L53.5,14.9 L54,15.7 L54.5,14.4 L55,13.8 L55.5,12.3 L56,11.2 L56.5,11.2 L57,12.2 L57.5,13.6 L58,14.5 L58.5,15.6 L59,16.4 L59.5,14.9 L60,14.5 L60.5,13.3 L61,14.4 L61.5,15.8 L62,16.6 L62.5,17.1 L63,16.2 L63.5,15.0 L64,14.3 L64.5,13.5 L65,12.9 L65.5,14.0 L66,15.1 L66.5,15.8 L67,16.0 L67.5,16.2 L68,17.5 L68.5,17.7 L69,17.6 L69.5,16.0 L70,14.0 L70.5,12.9 L71,13.1 L71.5,14.6 L72,14.3 L72.5,10.6 L73,9.1 L73.5,12.0 L74,15.2 L74.5,18.2 L75,17.1 L75.5,15.2 L76,13.6 L76.5,12.0 L77,10.9 L77.5,9.4 L78,10.0 L78.5,11.2 L79,13.2 L79.5,15.0 L80,16.1 L80.5,17.3 L81,19.0 L81.5,16.4 L82,13.2 L82.5,10.2 L83,12.0 L83.5,14.6 L84,16.9 L84.5,16.1 L85,15.2 L85.5,14.9 L86,13.9 L86.5,13.0 L87,12.3 L87.5,11.6 L88,12.1 L88.5,13.1 L89,14.3 L89.5,14.8 L90,15.6 L90.5,15.5 L91,14.0 L91.5,12.7 L92,11.0 L92.5,9.3 L93,8.2 L93.5,8.2 L94,9.2 L94.5,10.1 L95,12.1 L95.5,13.4 L96,14.3 L96.5,15.1 L97,14.8 L97.5,13.3 L98,12.2 L98.5,10.5 L99,9.7 L99.5,8.0 L100,8.1 L100.5,8.7 L101,10.0 L101.5,11.5 L102,12.5 L102.5,13.7 L103,11.8 L103.5,10.4 L104,9.5 L104.5,8.1 L105,7.9 L105.5,8.6 L106,10.1 L106.5,12.0 L107,12.8 L107.5,14.7 L108,16.3 L108.5,16.2 L109,15.1 L109.5,13.4 L110,11.5 L110.5,12.9 L111,14.6 L111.5,14.2 L112,12.6 L112.5,11.5 L113,11.3 L113.5,12.9 L114,14.3 L114.5,15.2 L115,15.2 L115.5,13.6 L116,12.7 L116.5,14.7 L117,16.0 L117.5,14.7 L118,13.4 L118.5,14.6 L119,15.7 L119.5,14.6 L120,14.3 L120.5,13.7 L121,13.1 L121.5,13.9 L122,14.4 L122.5,14.7 L123,13.7 L123.5,12.4 L124,10.8 L124.5,10.9 L125,11.7 L125.5,12.6 L126,14.1 L126.5,15.3 L127,15.3 L127.5,16.5 L128,16.5 L128.5,15.5 L129,13.4 L129.5,13.3 L130,14.7 L130.5,16.3 L131,15.9 L131.5,12.6 L132,10.8 L132.5,14.0 L133,16.4 L133.5,17.5 L134,17.0 L134.5,15.6 L135,14.8 L135.5,15.8 L136,16.9 L136.5,17.7 L137,19.1 L137.5,19.0 L138,18.7 L138.5,17.0 L139,16.7 L139.5,16.8 L140,15.5 L140.5,13.4 L141,12.4 L141.5,12.9 L142,14.2 L142.5,13.3 L143,11.9 L143.5,13.3 L144,14.1 L144.5,15.5 L145,16.6 L145.5,17.7 L146,17.0 L146.5,15.9 L147,15.6 L147.5,15.0 L148,14.6 L148.5,15.5 L149,15.3 L149.5,15.3 L150,15.5 L150.5,15.8 L151,16.2 L151.5,14.7 L152,12.3 L152.5,10.8 L153,10.8 L153.5,12.7 L154,14.1 L154.5,15.8 L155,17.6 L155.5,16.7 L156,16.4 L156.5,15.6 L157,15.3 L157.5,14.7 L158,15.5 L158.5,15.0 L159,14.4 L159.5,13.5 L160,14.2 L160.5,14.9 L161,15.4 L161.5,12.7 L162,10.7 L162.5,8.3 L163,10.6 L163.5,13.0 L164,15.3 L164.5,14.7 L165,12.9 L165.5,11.5 L166,9.5 L166.5,8.3 L167,8.8 L167.5,11.0 L168,12.0 L168.5,11.0 L169,9.8 L169.5,10.8 L170,12.0 L170.5,13.3 L171,13.9 L171.5,15.0 L172,15.1 L172.5,13.4 L173,12.2 L173.5,12.8 L174,13.9 L174.5,12.3 L175,9.7 L175.5,11.7 L176,13.5 L176.5,16.2 L177,15.8 L177.5,15.3 L178,16.7 L178.5,17.7 L179,15.9 L179.5,13.6 L180,12.4 L180.5,13.2 L181,14.9 L181.5,16.4 L182,15.1 L182.5,13.0 L183,9.9 L183.5,11.3 L184,13.0 L184.5,12.4 L185,11.8 L185.5,12.2 L186,12.9 L186.5,13.9 L187,14.7 L187.5,15.2 L188,16.8 L188.5,17.1 L189,14.7 L189.5,12.4 L190,11.7 L190.5,14.3 L191,16.4 L191.5,15.3 L192,14.3 L192.5,12.8 L193,12.2 L193.5,10.4 L194,9.2 L194.5,8.2 L195,10.1 L195.5,11.1 L196,12.1 L196.5,13.7 L197,14.8 L197.5,13.5 L198,13.9 L198.5,14.8 L199,15.0 L199.5,16.3 L200,15.2 L200.5,13.4 L201,12.3 L201.5,10.5 L202,8.3 L202.5,10.4 L203,12.2 L203.5,14.0 L204,15.1 L204.5,14.4 L205,13.5 L205.5,13.8 L206,14.8 L206.5,15.4 L207,16.6 L207.5,15.5 L208,13.9 L208.5,12.8 L209,13.6 L209.5,14.7 L210,15.4 L210.5,16.1 L211,17.4 L211.5,17.3 L212,15.9 L212.5,14.5 L213,13.5 L213.5,12.7 L214,13.9 L214.5,13.2 L215,10.1 L215.5,8.2 L216,8.4 L216.5,8.2 L217,10.5 L217.5,13.2 L218,12.4 L218.5,10.1 L219,8.5 L219.5,8.2 L220,8.2 L220.5,8.2 L221,8.0 L221.5,8.0 L222,10.0 L222.5,11.4 L223,13.1 L223.5,15.0 L224,13.6 L224.5,13.0 L225,13.1 L225.5,14.3 L226,15.4 L226.5,16.0 L227,16.0 L227.5,15.3 L228,14.8 L228.5,13.8 L229,12.4 L229.5,13.3 L230,14.5 L230.5,15.3 L231,16.3 L231.5,16.7 L232,15.0 L232.5,12.2 L233,10.6 L233.5,8.3 L234,9.1 L234.5,11.9 L235,13.9 L235.5,15.5 L236,16.1 L236.5,16.6 L237,16.1 L237.5,15.7 L238,14.8 L238.5,14.6 L239,13.7 L239.5,14.3 L240,15.6 L240.5,15.3 L241,14.7 L241.5,13.9 L242,12.9 L242.5,11.8 L243,11.5 L243.5,12.5 L244,13.6 L244.5,13.9 L245,12.4 L245.5,11.8 L246,13.4 L246.5,14.6 L247,16.0 L247.5,15.4 L248,15.2 L248.5,15.6 L249,16.3 L249.5,16.6 L250,17.2 L250.5,17.6 L251,17.1 L251.5,17.2 L252,16.9 L252.5,16.3 L253,16.3 L253.5,15.1 L254,14.2 L254.5,13.7 L255,15.0 L255.5,16.4 L256,17.1 L256.5,18.1 L257,17.1 L257.5,15.6 L258,15.2 L258.5,14.3 L259,13.8 L259.5,14.5 L260,15.3 L260.5,16.4 L261,15.8 L261.5,14.7 L262,15.2 L262.5,15.9 L263,16.3 L263.5,16.6 L264,16.4 L264.5,17.0 L265,17.4 L265.5,17.3 L266,15.4 L266.5,14.0 L267,12.0 L267.5,10.3 L268,12.3 L268.5,14.0 L269,16.1 L269.5,17.8 L270,17.9 L270.5,17.2 L271,16.2 L271.5,15.6 L272,14.9 L272.5,14.3 L273,15.1 L273.5,14.8 L274,14.2 L274.5,13.4 L275,13.1 L275.5,13.4 L276,13.8 L276.5,14.6 L277,14.9 L277.5,16.0 L278,15.7 L278.5,14.4 L279,13.2 L279.5,13.9 L280,14.9 L280.5,16.2 L281,18.1 L281.5,16.3 L282,14.9 L282.5,13.4 L283,12.0 L283.5,10.9 L284,12.4 L284.5,14.2 L285,13.0 L285.5,11.9 L286,10.9 L286.5,12.7 L287,13.7 L287.5,14.2 L288,11.9 L288.5,9.4 L289,11.3 L289.5,14.2 L290,16.4 L290.5,14.5 L291,13.2 L291.5,11.4 L292,9.9 L292.5,11.4 L293,13.6 L293.5,15.3 L294,15.4 L294.5,14.2 L295,11.8 L295.5,10.5 L296,9.2 L296.5,8.3 L297,9.3 L297.5,10.6 L298,12.2 L298.5,13.8 L299,14.3 L299.5,14.2 L300,15.1 L300.5,15.9 L301,15.5 L301.5,14.8 L302,14.6 L302.5,13.6 L303,13.2 L303.5,12.0 L304,10.9 L304.5,11.3 L305,12.2 L305.5,11.5 L306,12.3 L306.5,13.9 L307,12.8 L307.5,12.1 L308,10.8 L308.5,10.8 L309,11.9 L309.5,13.0 L310,14.0 L310.5,12.4 L311,10.8 L311.5,12.6 L312,14.2 L312.5,15.7 L313,17.3 L313.5,18.2 L314,17.7 L314.5,17.4 L315,16.3 L315.5,16.2 L316,15.6 L316.5,14.7 L317,14.5 L317.5,13.1 L318,14.3 L318.5,15.0 L319,15.5 L319.5,17.0 L320,17.4 L320.5,16.3 L321,14.7 L321.5,13.5 L322,12.7 L322.5,13.2 L323,13.7 L323.5,15.3 L324,15.0 L324.5,13.8 L325,13.0 L325.5,13.7 L326,14.6 L326.5,15.6 L327,15.7 L327.5,14.8 L328,13.7 L328.5,12.6 L329,13.3 L329.5,14.1 L330,14.7 L330.5,15.5 L331,16.6 L331.5,16.2 L332,15.6 L332.5,14.5 L333,14.2 L333.5,13.3 L334,13.5 L334.5,14.5 L335,15.2 L335.5,16.3 L336,16.9 L336.5,15.7 L337,15.6 L337.5,14.7 L338,15.0 L338.5,15.3 L339,14.4 L339.5,13.3 L340,12.4 L340.5,12.2 L341,13.0 L341.5,13.6 L342,14.6 L342.5,15.8 L343,15.7 L343.5,14.6 L344,13.7 L344.5,12.4 L345,10.7 L345.5,11.9 L346,13.3 L346.5,14.4 L347,15.8 L347.5,16.1 L348,15.3 L348.5,15.1 L349,15.8 L349.5,16.7 L350,16.8 L350.5,17.7 L351,18.7 L351.5,17.2 L352,16.4 L352.5,14.7 L353,14.1 L353.5,15.3 L354,16.7 L354.5,17.5 L355,18.9 L355.5,16.7 L356,14.1 L356.5,11.7 L357,9.8 L357.5,11.4 L358,13.5 L358.5,16.3 L359,15.1 L359.5,16.0 L360,16.4 L360.5,17.2 L361,17.2 L361.5,16.7 L362,16.3 L362.5,15.7 L363,14.8 L363.5,14.7 L364,15.3 L364.5,16.1 L365,14.8 L365.5,15.2 L366,15.9 L366.5,16.4 L367,17.5 L367.5,16.3 L368,15.8 L368.5,15.3 L369,14.4 L369.5,14.4 L370,15.2 L370.5,16.0 L371,16.7 L371.5,15.7 L372,15.7 L372.5,16.0 L373,16.5 L373.5,16.4 L374,17.5 L374.5,17.5 L375,18.5 L375.5,18.9 L376,18.7 L376.5,17.8 L377,17.2 L377.5,17.1 L378,18.2 L378.5,18.7 L379,19.3 L379.5,20.1 L380,19.3 L380.5,18.4 L381,16.9 L381.5,16.2 L382,15.1 L382.5,14.9 L383,15.9 L383.5,16.9 L384,17.6 L384.5,16.8 L385,16.0 L385.5,14.8 L386,14.5 L386.5,13.6 L387,14.0 L387.5,15.4 L388,15.7 L388.5,16.9 L389,16.7 L389.5,14.5 L390,12.8 L390.5,14.4 L391,16.4 L391.5,16.9 L392,15.7 L392.5,14.9 L393,13.1 L393.5,15.1 L394,15.8 L394.5,14.8 L395,12.7 L395.5,10.3 L396,9.8 L396.5,12.0 L397,14.6 L397.5,13.2 L398,12.5 L398.5,10.4 L399,8.6 L399.5,8.8 L400,10.8 L400.5,12.6 L401,12.2 L401.5,13.5 L402,12.5 L402.5,11.8 L403,10.6 L403.5,8.7 L404,7.7 L404.5,8.9 L405,10.5 L405.5,11.1 L406,12.1 L406.5,10.3 L407,9.4 L407.5,10.5 L408,12.3 L408.5,12.7 L409,12.4 L409.5,13.6 L410,14.0 L410.5,14.3 L411,13.0 L411.5,11.8 L412,11.0 L412.5,10.1 L413,9.1 L413.5,10.4 L414,10.9 L414.5,12.1 L415,11.1 L415.5,9.5 L416,9.5 L416.5,10.5 L417,11.9 L417.5,13.5 L418,14.5 L418.5,12.3 L419,11.2 L419.5,10.0 L420,8.8 L420.5,7.8 L421,8.3 L421.5,9.9 L422,11.6 L422.5,12.9 L423,11.9 L423.5,12.5 L424,13.3 L424.5,14.4 L425,12.8 L425.5,13.2 L426,14.4 L426.5,14.8 L427,14.5 L427.5,14.3 L428,14.9 L428.5,15.6 L429,16.0 L429.5,15.8 L430,15.1 L430.5,15.5 L431,16.4 L431.5,16.6 L432,16.9 L432.5,17.0 L433,16.8 L433.5,16.3 L434,15.9 L434.5,15.2 L435,14.9 L435.5,15.9 L436,15.9 L436.5,14.5 L437,16.0 L437.5,16.9 L438,15.9 L438.5,15.5 L439,14.4 L439.5,13.4 L440,13.1 L440.5,13.1 L441,13.5 L441.5,14.6 L442,15.1 L442.5,14.0 L443,12.7 L443.5,12.0 L444,10.7 L444.5,11.8 L445,12.8 L445.5,13.8 L446,14.4 L446.5,15.9 L447,15.8 L447.5,14.7 L448,14.9 L448.5,15.9 L449,17.6 L449.5,15.6 L450,14.3 L450.5,12.9 L451,11.4 L451.5,9.5 L452,8.2 L452.5,9.0 L453,11.0 L453.5,12.2 L454,13.6 L454.5,15.5 L455,15.3 L455.5,13.2 L456,11.1 L456.5,8.9 L457,8.2 L457.5,9.7 L458,11.5 L458.5,11.6 L459,10.5 L459.5,11.4 L460,11.8 L460.5,13.3 L461,14.0 L461.5,15.2 L462,15.9 L462.5,16.9 L463,16.3 L463.5,15.3 L464,14.1 L464.5,12.3 L465,11.1 L465.5,9.6 L466,8.3 L466.5,8.1 L467,8.2 L467.5,7.9 L468,9.3 L468.5,11.1 L469,12.3 L469.5,13.6 L470,15.5 L470.5,15.2 L471,14.0 L471.5,14.3 L472,15.0 L472.5,16.5 L473,17.9 L473.5,16.2 L474,14.5 L474.5,12.9 L475,11.0 L475.5,9.9 L476,11.9 L476.5,13.7 L477,15.6 L477.5,17.0 L478,17.1 L478.5,16.9 L479,15.5 L479.5,15.1 L480,14.6 L480.5,14.4 L481,14.9 L481.5,15.8 L482,15.0 L482.5,13.3 L483,12.1 L483.5,10.6 L484,9.8 L484.5,8.3 L485,8.3 L485.5,9.3 L486,10.2 L486.5,10.6 L487,9.7 L487.5,10.0 L488,10.9 L488.5,11.6 L489,11.1 L489.5,11.6 L490,12.3 L490.5,10.8 L491,9.4 L491.5,9.1 L492,10.5 L492.5,11.0 L493,9.0 L493.5,7.8 L494,7.8 L494.5,9.4 L495,9.4 L495.5,8.2 L496,8.6 L496.5,10.0 L497,11.5 L497.5,12.5 L498,13.9 L498.5,15.3 L499,15.4 L499.5,16.6 L500,16.9 L500.5,16.8 L501,17.3 L501.5,14.6 L502,12.0 L502.5,10.1 L503,12.7 L503.5,14.5 L504,13.3 L504.5,12.0 L505,11.1 L505.5,9.4 L506,10.3 L506.5,11.4 L507,13.2 L507.5,13.1 L508,13.3 L508.5,13.7 L509,11.8 L509.5,10.4 L510,9.8 L510.5,8.3 L511,8.0 L511.5,8.8 L512,10.2 L512.5,11.4 L513,12.9 L513.5,14.2 L514,16.1 L514.5,14.8 L515,14.4 L515.5,13.6 L516,12.2 L516.5,11.3 L517,10.7 L517.5,12.3 L518,13.2 L518.5,14.1 L519,14.5 L519.5,15.5 L520,15.5 L520.5,12.8 L521,9.8 L521.5,7.7 L522,10.0 L522.5,11.2 L523,9.8 L523.5,9.5 L524,11.8 L524.5,13.4 L525,15.1 L525.5,16.3 L526,16.5 L526.5,14.9 L527,13.4 L527.5,12.6 L528,13.8 L528.5,15.3 L529,16.2 L529.5,17.7 L530,17.0 L530.5,16.5 L531,15.5 L531.5,14.5 L532,15.1 L532.5,16.2 L533,16.7 L533.5,16.8 L534,14.9 L534.5,13.6 L535,15.1 L535.5,17.0 L536,16.5 L536.5,15.9 L537,15.2 L537.5,14.5 L538,15.6 L538.5,16.1 L539,16.8 L539.5,17.1 L540,17.6 L540.5,17.2 L541,17.0 L541.5,16.3 L542,16.0 L542.5,16.1 L543,16.8 L543.5,16.8 L544,17.9 L544.5,17.9 L545,17.2 L545.5,16.6 L546,16.2 L546.5,16.5 L547,17.1 L547.5,17.3 L548,17.4 L548.5,15.8 L549,15.0 L549.5,16.5 L550,18.4 L550.5,20.0 L551,20.2 L551.5,19.8 L552,20.0 L552.5,19.1 L553,17.7 L553.5,16.5 L554,17.6 L554.5,17.4 L555,17.3 L555.5,16.6 L556,17.0 L556.5,18.4 L557,18.9 L557.5,18.0 L558,17.5 L558.5,17.3 L559,16.8 L559.5,16.4 L560,16.2 L560.5,17.1 L561,17.1 L561.5,16.6 L562,16.7 L562.5,16.3 L563,17.2 L563.5,17.3 L564,17.3 L564.5,18.0 L565,18.7 L565.5,16.7 L566,14.5 L566.5,12.2 L567,11.9 L567.5,14.6 L568,13.4 L568.5,11.7 L569,13.5 L569.5,14.7 L570,15.3 L570.5,14.5 L571,13.4 L571.5,12.4 L572,10.9 L572.5,10.4 L573,8.9 L573.5,10.0 L574,10.8 L574.5,8.8 L575,8.0 L575.5,8.2 L576,9.9 L576.5,11.7 L577,12.8 L577.5,10.5 L578,9.2 L578.5,8.0 L579,8.3 L579.5,7.6 L580,8.4 L580.5,8.3 L581,8.3 L581.5,8.3 L582,8.4 L582.5,8.8 L583,10.7 L583.5,12.2 L584,13.4 L584.5,14.6 L585,14.6 L585.5,15.4 L586,13.8 L586.5,12.5 L587,10.9 L587.5,9.6 L588,8.1 L588.5,9.5 L589,10.3 L589.5,12.0 L590,13.8 L590.5,14.4 L591,16.3 L591.5,16.4 L592,15.9 L592.5,15.8 L593,16.4 L593.5,16.8 L594,16.8 L594.5,17.6 L595,17.3 L595.5,16.3 L596,15.6 L596.5,15.5 L597,14.4 L597.5,15.6 L598,15.6 L598.5,16.4 L599,17.0 L599.5,17.6 L600,18.0 L600.5,17.2 L601,16.1 L601.5,15.3 L602,14.9 L602.5,15.5 L603,17.0 L603.5,16.9 L604,15.9 L604.5,14.7 L605,13.3 L605.5,12.6 L606,13.5 L606.5,15.4 L607,16.2 L607.5,17.1 L608,15.5 L608.5,13.8 L609,13.0 L609.5,11.6 L610,13.8 L610.5,15.1 L611,16.8 L611.5,18.3 L612,18.7 L612.5,17.6 L613,17.3 L613.5,17.1 L614,16.2 L614.5,17.0 L615,17.3 L615.5,18.3 L616,18.5 L616.5,18.8 L617,18.1 L617.5,16.7 L618,16.0 L618.5,14.8 L619,16.4 L619.5,17.1 L620,16.6 L620.5,16.0 L621,15.5 L621.5,16.4 L622,17.2 L622.5,17.5 L623,16.5 L623.5,15.9 L624,16.2 L624.5,16.0 L625,16.8 L625.5,16.3 L626,15.4 L626.5,15.9 L627,16.0 L627.5,16.9 L628,18.0 L628.5,18.8 L629,18.5 L629.5,16.9 L630,15.6 L630.5,14.0 L631,13.6 L631.5,15.5 L632,16.5 L632.5,17.8 L633,18.7 L633.5,17.2 L634,14.5 L634.5,12.2 L635,9.2 L635.5,11.2 L636,14.0 L636.5,16.6 L637,17.1 L637.5,16.5 L638,15.4 L638.5,14.9 L639,14.1 L639.5,13.2 L640,12.8 L640.5,13.5 L641,12.4 L641.5,9.8 L642,7.8 L642.5,7.9 L643,9.3 L643.5,11.8 L644,12.7 L644.5,11.4 L645,9.6 L645.5,8.1 L646,7.6 L646.5,8.4 L647,9.8 L647.5,11.6 L648,12.7 L648.5,11.8 L649,12.8 L649.5,13.5 L650,14.4 L650.5,15.8 L651,13.9 L651.5,10.7 L652,8.3 L652.5,12.0 L653,14.8 L653.5,14.7 L654,14.7 L654.5,12.6 L655,11.0 L655.5,8.6 L656,9.1 L656.5,10.9 L657,12.2 L657.5,14.0 L658,15.0 L658.5,14.2 L659,12.7 L659.5,12.0 L660,10.5 L660.5,9.2 L661,9.9 L661.5,11.4 L662,9.3 L662.5,8.0 L663,9.4 L663.5,11.1 L664,8.4 L664.5,9.9 L665,11.9 L665.5,14.8 L666,17.5 L666.5,17.5 L667,17.1 L667.5,15.9 L668,16.3 L668.5,16.5 L669,16.4 L669.5,15.7 L670,15.3 L670.5,14.1 L671,13.5 L671.5,14.4 L672,14.9 L672.5,15.4 L673,13.6 L673.5,11.3 L674,13.9 L674.5,15.6 L675,17.6 L675.5,18.7 L676,18.8 L676.5,17.8 L677,17.8 L677.5,17.1 L678,16.9 L678.5,16.4 L679,16.5 L679.5,17.0 L680,17.7 L680.5,17.8 L681,17.2 L681.5,16.1 L682,15.6 L682.5,14.9 L683,14.5 L683.5,14.7 L684,15.1 L684.5,14.9 L685,12.8 L685.5,14.7 L686,17.4 L686.5,17.0 L687,16.0 L687.5,15.2 L688,13.9 L688.5,13.5 L689,13.3 L689.5,13.6 L690,14.6 L690.5,15.8 L691,15.9 L691.5,15.3 L692,14.4 L692.5,14.0 L693,13.6 L693.5,13.9 L694,13.7 L694.5,12.5 L695,11.5 L695.5,12.4 L696,13.4 L696.5,14.2 L697,14.8 L697.5,14.6 L698,14.3 L698.5,12.9 L699,12.1 L699.5,11.5 L700,12.6 L700.5,13.4 L701,14.4 L701.5,15.4 L702,16.4 L702.5,17.7 L703,16.9 L703.5,17.0 L704,16.9 L704.5,17.4 L705,17.7 L705.5,16.9 L706,16.3 L706.5,14.9 L707,14.3 L707.5,13.7 L708,12.6 L708.5,13.2 L709,14.2 L709.5,14.6 L710,15.7 L710.5,16.4 L711,16.5 L711.5,15.5 L712,15.1 L712.5,13.6 L713,13.4 L713.5,13.9 L714,14.2 L714.5,15.4 L715,14.8 L715.5,12.8 L716,13.6 L716.5,15.2 L717,16.1 L717.5,16.1 L718,15.4 L718.5,15.8 L719,17.1 L719.5,16.9 L720,16.7 L720.5,17.4 L721,18.2 L721.5,17.6 L722,17.0 L722.5,17.5 L723,18.1 L723.5,18.3 L724,17.7 L724.5,17.6 L725,17.0 L725.5,16.5 L726,15.8 L726.5,15.3 L727,16.0 L727.5,16.6 L728,16.9 L728.5,18.0 L729,18.3 L729.5,18.2 L730,17.4 L730.5,17.3 L731,17.3 L731.5,17.2 L732,17.8 L732.5,17.4 L733,17.4 L733.5,17.2 L734,16.6 L734.5,15.8 L735,16.2 L735.5,17.0 L736,17.0 L736.5,17.6 L737,16.7 L737.5,16.3 L738,15.6 L738.5,14.4 L739,14.0 L739.5,15.1 L740,16.1 L740.5,17.0 L741,18.1 L741.5,18.1 L742,17.8 L742.5,17.0 L743,17.3 L743.5,16.7 L744,17.3 L744.5,17.4 L745,18.1 L745.5,17.1 L746,16.7 L746.5,16.1 L747,16.5 L747.5,17.1 L748,17.9 L748.5,17.9 L749,18.0 L749.5,17.3 L750,17.4 L750.5,16.7 L751,15.9 L751.5,15.2 L752,14.6 L752.5,13.9 L753,14.0 L753.5,14.5 L754,15.0 L754.5,15.7 L755,16.5 L755.5,17.1 L756,18.3 L756.5,18.0 L757,18.3 L757.5,18.5 L758,18.3 L758.5,18.5 L759,17.4 L759.5,16.2 L760,15.2 L760.5,14.6 L761,14.6 L761.5,15.4 L762,16.5 L762.5,16.2 L763,15.4 L763.5,14.9 L764,15.5 L764.5,16.3 L765,16.8 L765.5,17.0 L766,16.7 L766.5,15.8 L767,15.6 L767.5,15.5 L768,16.5 L768.5,16.3 L769,17.2 L769.5,17.7 L770,17.2 L770.5,16.6 L771,16.4 L771.5,17.1 L772,17.7 L772.5,16.6 L773,15.9 L773.5,15.5 L774,16.0 L774.5,16.5 L775,14.8 L775.5,12.1 L776,9.5 L776.5,10.9 L777,13.1 L777.5,15.0 L778,17.9 L778.5,17.0 L779,16.4 L779.5,16.2 L780,16.3 L780.5,17.5 L781,17.1 L781.5,15.7 L782,15.2 L782.5,14.2 L783,12.9 L783.5,12.4 L784,13.3 L784.5,14.5 L785,15.8 L785.5,16.2 L786,14.9 L786.5,13.0 L787,11.9 L787.5,14.0 L788,15.5 L788.5,16.9 L789,18.5 L789.5,19.1 L790,19.1 L790.5,17.4 L791,14.9 L791.5,12.2 L792,13.8 L792.5,16.6 L793,18.3 L793.5,18.8 L794,18.4 L794.5,17.9 L795,16.7 L795.5,16.2 L796,16.2 L796.5,16.5 L797,17.3 L797.5,17.7 L798,18.1 L798.5,16.7 L799,14.6 L799.5,12.1 L800,12.4 L800.5,14.2 L801,15.8 L801.5,15.3 L802,14.1 L802.5,14.2 L803,15.2 L803.5,15.4 L804,14.8 L804.5,13.6 L805,12.7 L805.5,12.1 L806,13.3 L806.5,13.8 L807,14.8 L807.5,14.6 L808,15.6 L808.5,15.8 L809,16.8 L809.5,17.4 L810,15.6 L810.5,13.9 L811,12.0 L811.5,10.0 L812,12.5 L812.5,14.2 L813,13.9 L813.5,12.8 L814,12.2 L814.5,13.5 L815,14.5 L815.5,15.1 L816,16.1 L816.5,17.1 L817,16.9 L817.5,15.5 L818,13.3 L818.5,14.1 L819,15.8 L819.5,17.2 L820,19.2 L820.5,19.5 L821,18.1 L821.5,16.8 L822,15.3 L822.5,15.7 L823,15.7 L823.5,14.6 L824,15.3 L824.5,16.4 L825,17.0 L825.5,16.8 L826,15.9 L826.5,15.0 L827,13.7 L827.5,14.5 L828,15.7 L828.5,16.8 L829,17.6 L829.5,17.1 L830,17.0 L830.5,16.2 L831,15.9 L831.5,16.9 L832,17.3 L832.5,17.3 L833,16.3 L833.5,15.3 L834,14.0 L834.5,12.8 L835,13.2 L835.5,14.7 L836,15.8 L836.5,15.9 L837,14.5 L837.5,14.2 L838,13.1 L838.5,14.1 L839,14.9 L839.5,15.6 L840,14.0 L840.5,13.4 L841,14.6 L841.5,16.5 L842,15.2 L842.5,14.0 L843,13.2 L843.5,14.6 L844,14.4 L844.5,13.4 L845,12.8 L845.5,14.0 L846,14.7 L846.5,15.6 L847,16.5 L847.5,17.5 L848,16.6 L848.5,15.2 L849,13.9 L849.5,15.0 L850,14.5 L850.5,13.3 L851,13.3 L851.5,14.8 L852,15.4 L852.5,15.9 L853,15.0 L853.5,14.0 L854,13.5 L854.5,14.4 L855,15.3 L855.5,15.8 L856,17.4 L856.5,17.8 L857,18.1 L857.5,17.2 L858,16.7 L858.5,16.3 L859,16.9 L859.5,17.5 L860,16.9 L860.5,16.0 L861,15.7 L861.5,15.8 L862,16.4 L862.5,16.2 L863,15.2 L863.5,15.5 L864,15.7 L864.5,16.0 L865,16.7 L865.5,17.2 L866,17.7 L866.5,18.9 L867,17.8 L867.5,17.7 L868,18.7 L868.5,19.0 L869,18.5 L869.5,18.5 L870,18.5 L870.5,18.1 L871,17.6 L871.5,17.6 L872,18.3 L872.5,18.2 L873,18.6 L873.5,18.3 L874,17.1 L874.5,16.5 L875,15.9 L875.5,15.9 L876,16.3 L876.5,17.5 L877,18.3 L877.5,18.2 L878,17.5 L878.5,16.8 L879,16.1 L879.5,16.7 L880,17.5 L880.5,18.3 L881,18.2 L881.5,17.5 L882,16.5 L882.5,16.6 L883,16.7 L883.5,15.8 L884,15.2 L884.5,16.0 L885,17.0 L885.5,17.2 L886,16.6 L886.5,16.0 L887,17.1 L887.5,16.6 L888,15.5 L888.5,14.4 L889,13.5 L889.5,12.7 L890,13.4 L890.5,14.7 L891,15.7 L891.5,16.9 L892,15.9 L892.5,14.1 L893,12.6 L893.5,13.8 L894,14.7 L894.5,16.3 L895,17.7 L895.5,17.3 L896,14.8 L896.5,11.7 L897,9.1 L897.5,8.7 L898,11.2 L898.5,12.9 L899,12.0 L899.5,11.2 L900,12.5 L900.5,13.5 L901,14.6 L901.5,12.8 L902,12.1 L902.5,13.8 L903,14.5 L903.5,14.8 L904,13.2 L904.5,11.1 L905,9.2 L905.5,9.6 L906,11.7 L906.5,10.7 L907,8.6 L907.5,7.9 L908,7.9 L908.5,7.8 L909,8.3 L909.5,10.6 L910,10.9 L910.5,10.4 L911,12.7 L911.5,15.4 L912,16.8 L912.5,16.6 L913,15.8 L913.5,14.9 L914,14.5 L914.5,13.6 L915,12.7 L915.5,13.0 L916,13.4 L916.5,14.1 L917,13.7 L917.5,13.1 L918,13.8 L918.5,15.3 L919,14.4 L919.5,13.7 L920,12.1 L920.5,13.1 L921,13.8 L921.5,15.4 L922,15.4 L922.5,15.2 L923,14.3 L923.5,14.7 L924,15.1 L924.5,15.6 L925,16.3 L925.5,17.4 L926,15.9 L926.5,14.8 L927,13.1 L927.5,14.8 L928,15.1 L928.5,14.3 L929,14.6 L929.5,15.0 L930,14.1 L930.5,12.5 L931,11.3 L931.5,9.8 L932,8.4 L932.5,8.6 L933,9.3 L933.5,11.2 L934,12.9 L934.5,14.1 L935,15.4 L935.5,16.3 L936,15.8 L936.5,15.8 L937,16.7 L937.5,17.2 L938,17.7 L938.5,17.8 L939,18.3 L939.5,18.3 L940,14.2 L940.5,11.2 L941,8.6 L941.5,11.6 L942,14.8 L942.5,14.2 L943,13.9 L943.5,13.6 L944,14.2 L944.5,13.7 L945,13.5 L945.5,13.6 L946,14.0 L946.5,14.8 L947,15.5 L947.5,16.7 L948,17.3 L948.5,16.9 L949,15.9 L949.5,15.4 L950,16.2 L950.5,17.1 L951,17.3 L951.5,17.9 L952,17.7 L952.5,17.2 L953,16.9 L953.5,16.6 L954,17.0 L954.5,17.9 L955,18.0 L955,23 Z" fill="#2aa862"/></svg>
</div>
<div class="t" style="left:33px;top:657.6px;font-size:6.4px;color:#e2ece4;-webkit-text-stroke:.15px #e2ece4;word-spacing:.3px">47.3m - EP4 Bus Music ft. Indika de Silva</div>
<div class="a" style="left:822.4px;top:698.3px;width:83.3px;height:4.8px;border-radius:2.4px;background:#8a8a8a"></div>
<div class="a" style="left:30px;top:20px;width:964px;height:685px;border-radius:4px 4px 3px 3px;box-shadow:inset 1.2px 0 0 rgba(255,255,255,.045),inset -1.5px 0 0 rgba(255,255,255,.045)"></div>
</div></body></html>
